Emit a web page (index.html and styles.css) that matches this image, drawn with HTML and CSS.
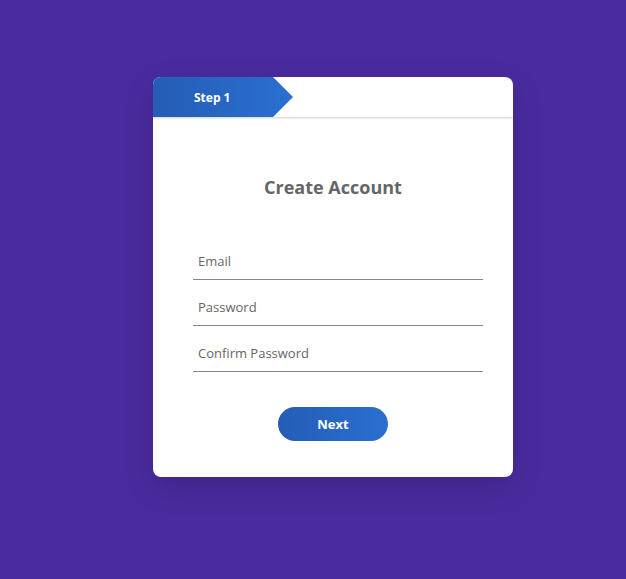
FILE: index.html
```html
<!DOCTYPE html>
<html lang="en">
<head>
  <meta charset="UTF-8">
  <meta name="viewport" content="width=device-width, initial-scale=1.0">
  <title>Create Account</title>
  <link rel="stylesheet" href="styles.css">
</head>
<body>
  <div class="card">
    <div class="steps">
      <div class="step">Step 1</div>
    </div>
    <form class="form">
      <h2>Create Account</h2>
      <input class="field" type="email" placeholder="Email">
      <input class="field" type="password" placeholder="Password">
      <input class="field" type="password" placeholder="Confirm Password">
      <button class="next" type="button">Next</button>
    </form>
  </div>
</body>
</html>
```

FILE: styles.css
```css
* {
  margin: 0;
  padding: 0;
  box-sizing: border-box;
}
body {
  font-family: "Open Sans", "Noto Sans", sans-serif;
  background-color: #4a2b9f;
  color: #666;
  min-height: 579px;
  display: flex;
  justify-content: center;
  padding-top: 77px;
  padding-left: 40px;
}
.card {
  width: 360px;
  height: 400px;
  background: #fff;
  border-radius: 8px;
  box-shadow: 0 10px 30px rgba(0, 0, 0, 0.15);
  overflow: hidden;
}
.steps {
  height: 40px;
  box-shadow: 0 1px 2px rgba(0, 0, 0, 0.2);
  position: relative;
}
.step {
  width: 140px;
  height: 40px;
  background: linear-gradient(90deg, #245db5, #2a6fd1);
  clip-path: polygon(0 0, 120px 0, 140px 50%, 120px 100%, 0 100%);
  color: #fff;
  font-weight: 700;
  font-size: 12px;
  line-height: 42px;
  padding-left: 41px;
}
.form {
  display: flex;
  flex-direction: column;
  align-items: center;
  padding-top: 58px;
}
h2 {
  font-size: 18px;
  line-height: 24px;
  font-weight: 700;
  color: #666;
  margin-bottom: 44px;
}
.field {
  width: 290px;
  height: 37px;
  border: none;
  border-bottom: 1px solid #888;
  font-family: inherit;
  font-size: 13px;
  color: #555;
  padding: 0 5px;
  outline: none;
  margin-bottom: 9px;
  margin-left: 10px;
}
.field::placeholder {
  color: #666;
}
.next {
  margin-top: 26px;
  width: 110px;
  height: 34px;
  border: none;
  border-radius: 17px;
  background: linear-gradient(90deg, #245db5, #2a6fd1);
  color: #fff;
  font-family: inherit;
  font-weight: 700;
  font-size: 13px;
}
```
